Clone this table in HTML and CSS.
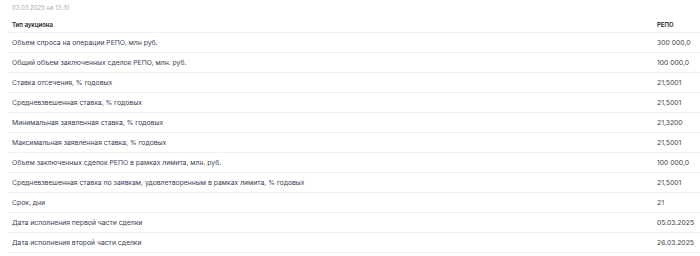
FILE: index.html
```html
<!DOCTYPE html>
<html lang="ru">
<head>
<meta charset="utf-8">
<link rel="stylesheet" href="styles.css">
</head>
<body>
<div class="page">
  <div class="stamp">03.03.2025 на 13:31</div>
  <table class="grid">
    <colgroup><col class="c-name"><col class="c-val"></colgroup>
    <thead>
      <tr><th>Тип аукциона</th><th>РЕПО</th></tr>
    </thead>
    <tbody>
      <tr><td>Объем спроса на операции РЕПО, млн руб.</td><td class="val">300 000,0</td></tr>
      <tr><td>Общий объем заключенных сделок РЕПО, млн. руб.</td><td class="val">100 000,0</td></tr>
      <tr><td>Ставка отсечения, % годовых</td><td class="val">21,5001</td></tr>
      <tr><td>Средневзвешенная ставка, % годовых</td><td class="val">21,5001</td></tr>
      <tr><td>Минимальная заявленная ставка, % годовых</td><td class="val">21,3200</td></tr>
      <tr><td>Максимальная заявленная ставка, % годовых</td><td class="val">21,5001</td></tr>
      <tr><td>Объем заключенных сделок РЕПО в рамках лимита, млн. руб.</td><td class="val">100 000,0</td></tr>
      <tr><td>Средневзвешенная ставка по заявкам, удовлетворенным в рамках лимита, % годовых</td><td class="val">21,5001</td></tr>
      <tr><td>Срок, дни</td><td class="val">21</td></tr>
      <tr><td>Дата исполнения первой части сделки</td><td class="val">05.03.2025</td></tr>
      <tr><td>Дата исполнения второй части сделки</td><td class="val">26.03.2025</td></tr>
    </tbody>
  </table>
</div>
</body>
</html>
```
FILE: styles.css
```css
html, body {
  margin: 0;
  padding: 0;
  background: #fff;
}
.page {
  padding: 0 0 0 8px;
  font-family: Inter, "Noto Sans", sans-serif;
  overflow: hidden;
}
.stamp {
  height: 14px;
  line-height: 15px;
  padding-left: 4px;
  font-size: 6px;
  color: #a7abb3;
}
.grid {
  width: 692px;
  border-collapse: collapse;
  table-layout: fixed;
}
.c-name {
  width: 645px;
}
.grid th, .grid td {
  height: 19px;
  padding: 0 0 0 4px;
  text-align: left;
  border-bottom: 1px solid #eceef1;
  white-space: nowrap;
  overflow: hidden;
}
.grid th {
  height: 16px;
  padding-top: 2px;
  font-size: 6px;
  font-weight: 600;
  color: #1b1d21;
}
.grid td {
  font-size: 6.8px;
  color: #3a4254;
}
.grid td.val {
  color: #3c3f46;
}
```
